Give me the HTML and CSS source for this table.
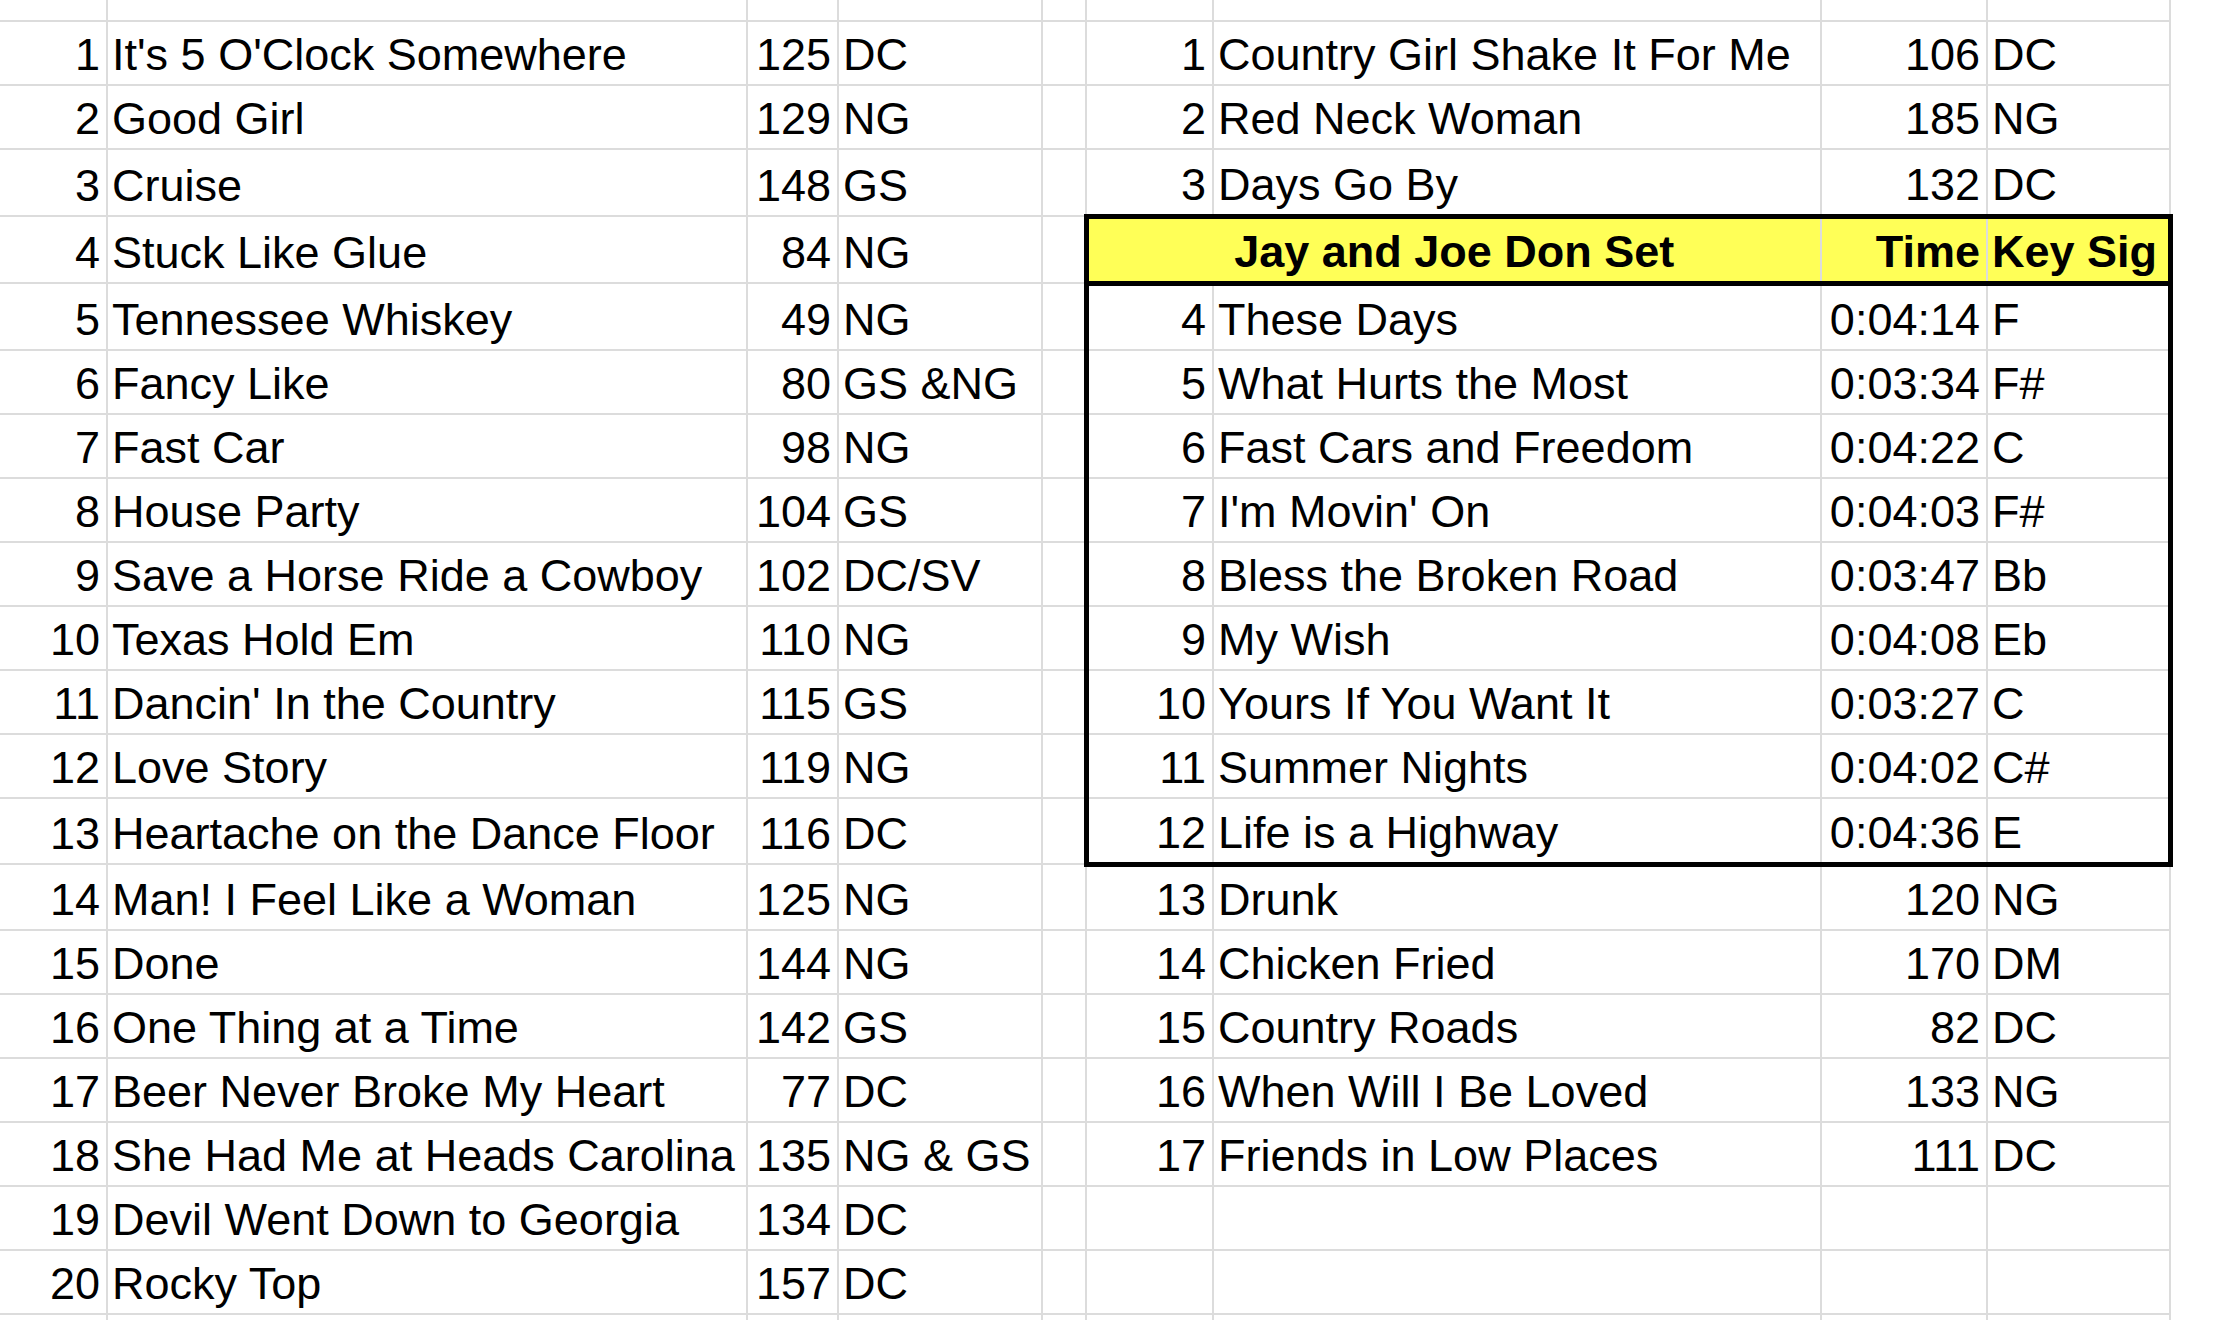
FILE: index.html
```html
<!DOCTYPE html>
<html>
<head>
<meta charset="utf-8">
<title>Set list</title>
<link rel="stylesheet" href="styles.css">
</head>
<body>
<table class="sheet">
  <colgroup>
    <col class="c-a"><col class="c-b"><col class="c-c"><col class="c-d"><col class="c-e">
    <col class="c-f"><col class="c-g"><col class="c-h"><col class="c-i">
  </colgroup>
  <tbody>
    <tr class="top"><td></td><td></td><td></td><td></td><td></td><td></td><td></td><td></td><td></td></tr>
    <tr><td class="n">1</td><td>It's 5 O'Clock Somewhere</td><td class="n">125</td><td>DC</td><td></td><td class="n">1</td><td>Country Girl Shake It For Me</td><td class="n">106</td><td>DC</td></tr>
    <tr><td class="n">2</td><td>Good Girl</td><td class="n">129</td><td>NG</td><td></td><td class="n">2</td><td>Red Neck Woman</td><td class="n">185</td><td>NG</td></tr>
    <tr class="pre"><td class="n">3</td><td>Cruise</td><td class="n">148</td><td>GS</td><td></td><td class="n">3</td><td>Days Go By</td><td class="n">132</td><td>DC</td></tr>
    <tr class="hdr"><td class="n">4</td><td>Stuck Like Glue</td><td class="n">84</td><td>NG</td><td></td><td class="title bl" colspan="2">Jay and Joe Don Set</td><td class="n head">Time</td><td class="head br">Key Sig</td></tr>
    <tr class="pre"><td class="n">5</td><td>Tennessee Whiskey</td><td class="n">49</td><td>NG</td><td></td><td class="n bl">4</td><td>These Days</td><td class="n">0:04:14</td><td class="br">F</td></tr>
    <tr><td class="n">6</td><td>Fancy Like</td><td class="n">80</td><td>GS &amp;NG</td><td></td><td class="n bl">5</td><td>What Hurts the Most</td><td class="n">0:03:34</td><td class="br">F#</td></tr>
    <tr><td class="n">7</td><td>Fast Car</td><td class="n">98</td><td>NG</td><td></td><td class="n bl">6</td><td>Fast Cars and Freedom</td><td class="n">0:04:22</td><td class="br">C</td></tr>
    <tr><td class="n">8</td><td>House Party</td><td class="n">104</td><td>GS</td><td></td><td class="n bl">7</td><td>I'm Movin' On</td><td class="n">0:04:03</td><td class="br">F#</td></tr>
    <tr><td class="n">9</td><td>Save a Horse Ride a Cowboy</td><td class="n">102</td><td>DC/SV</td><td></td><td class="n bl">8</td><td>Bless the Broken Road</td><td class="n">0:03:47</td><td class="br">Bb</td></tr>
    <tr><td class="n">10</td><td>Texas Hold Em</td><td class="n">110</td><td>NG</td><td></td><td class="n bl">9</td><td>My Wish</td><td class="n">0:04:08</td><td class="br">Eb</td></tr>
    <tr><td class="n">11</td><td>Dancin' In the Country</td><td class="n">115</td><td>GS</td><td></td><td class="n bl">10</td><td>Yours If You Want It</td><td class="n">0:03:27</td><td class="br">C</td></tr>
    <tr><td class="n">12</td><td>Love Story</td><td class="n">119</td><td>NG</td><td></td><td class="n bl">11</td><td>Summer Nights</td><td class="n">0:04:02</td><td class="br">C#</td></tr>
    <tr class="edge"><td class="n">13</td><td>Heartache on the Dance Floor</td><td class="n">116</td><td>DC</td><td></td><td class="n bl bb">12</td><td class="bb">Life is a Highway</td><td class="n bb">0:04:36</td><td class="br bb">E</td></tr>
    <tr class="edge"><td class="n">14</td><td>Man! I Feel Like a Woman</td><td class="n">125</td><td>NG</td><td></td><td class="n">13</td><td>Drunk</td><td class="n">120</td><td>NG</td></tr>
    <tr><td class="n">15</td><td>Done</td><td class="n">144</td><td>NG</td><td></td><td class="n">14</td><td>Chicken Fried</td><td class="n">170</td><td>DM</td></tr>
    <tr><td class="n">16</td><td>One Thing at a Time</td><td class="n">142</td><td>GS</td><td></td><td class="n">15</td><td>Country Roads</td><td class="n">82</td><td>DC</td></tr>
    <tr><td class="n">17</td><td>Beer Never Broke My Heart</td><td class="n">77</td><td>DC</td><td></td><td class="n">16</td><td>When Will I Be Loved</td><td class="n">133</td><td>NG</td></tr>
    <tr><td class="n">18</td><td>She Had Me at Heads Carolina</td><td class="n">135</td><td>NG &amp; GS</td><td></td><td class="n">17</td><td>Friends in Low Places</td><td class="n">111</td><td>DC</td></tr>
    <tr><td class="n">19</td><td>Devil Went Down to Georgia</td><td class="n">134</td><td>DC</td><td></td><td></td><td></td><td></td><td></td></tr>
    <tr><td class="n">20</td><td>Rocky Top</td><td class="n">157</td><td>DC</td><td></td><td></td><td></td><td></td><td></td></tr>
    <tr class="bottom"><td></td><td></td><td></td><td></td><td></td><td></td><td></td><td></td><td></td></tr>
  </tbody>
</table>
</body>
</html>
```

FILE: styles.css
```css
html, body {
  margin: 0;
  padding: 0;
  background: #ffffff;
  overflow: hidden;
}

.sheet {
  border-collapse: collapse;
  table-layout: fixed;
  width: 2170px;
  font-family: "Liberation Sans", Arial, sans-serif;
  font-size: 45px;
  color: #000000;
}

.c-a { width: 107px; }
.c-b { width: 640px; }
.c-c { width: 91px; }
.c-d { width: 204px; }
.c-e { width: 44px; }
.c-f { width: 127px; }
.c-g { width: 608px; }
.c-h { width: 166px; }
.c-i { width: 183px; }

.sheet td {
  border: 2px solid #dcdcdc;
  height: 55px;
  padding: 0 6px 7px 4px;
  line-height: 45px;
  vertical-align: bottom;
  white-space: nowrap;
  overflow: visible;
  text-align: left;
}

.sheet td:first-child {
  border-left: none;
}

.sheet td.n {
  text-align: right;
}

.sheet tr.top td {
  border-top: none;
  height: 20px;
  padding: 0;
}

.sheet tr.bottom td {
  border-bottom: none;
  height: 10px;
  padding: 0;
}

.sheet tr.pre td { height: 56.5px; }
.sheet tr.edge td { height: 55.5px; }

.sheet tr.hdr td.title,
.sheet tr.hdr td.head {
  background: #ffff57;
  font-weight: bold;
  border-top: 5px solid #000000;
  border-bottom: 5px solid #000000;
}

.sheet tr.hdr td.title {
  text-align: center;
  padding-left: 0;
  padding-right: 0;
}

.sheet td.bl { border-left: 5px solid #000000; }
.sheet td.br { border-right: 5px solid #000000; }
.sheet td.bb { border-bottom: 5px solid #000000; }
```
